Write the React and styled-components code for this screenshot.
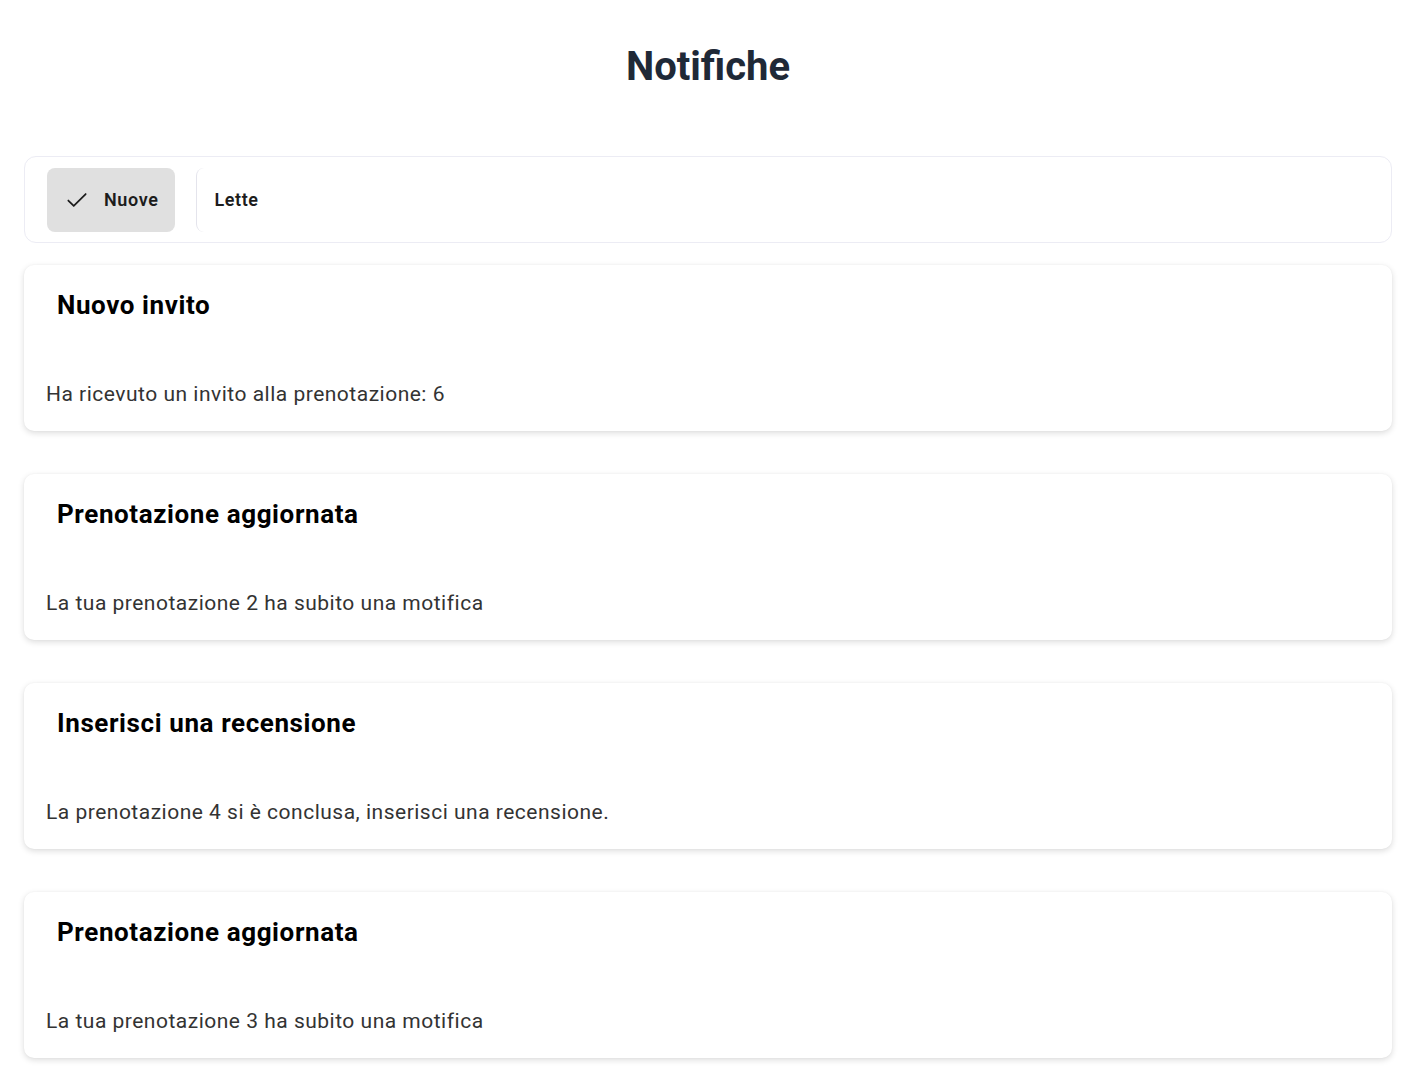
import styled, { createGlobalStyle } from "styled-components";

const GlobalStyle = createGlobalStyle`
    body {
        margin: 0;
        background: #ffffff;
        font-family: Roboto, "Liberation Sans", sans-serif;
    }
`

const Page = styled.div`
    padding: 0 20px 24px 24px;
`

const Title = styled.h1`
    margin: 0;
    padding-top: 42px;
    height: 156px;
    box-sizing: border-box;
    text-align: center;
    font-size: 40px;
    line-height: 50px;
    font-weight: 700;
    color: #1f2937;
`

const Tabs = styled.div`
    display: flex;
    align-items: center;
    gap: 21px;
    height: 87px;
    box-sizing: border-box;
    padding: 0 22px;
    border: 1px solid #ececf4;
    border-radius: 12px;
`

const Tab = styled.button`
    display: flex;
    align-items: center;
    gap: 14px;
    height: 64px;
    padding: 0 17px;
    border: none;
    border-left: ${p => p.$active ? "none" : "1px solid #e4e4ec"};
    border-radius: 8px;
    background: ${p => p.$active ? "#e0e0e0" : "transparent"};
    font-family: Roboto, "Liberation Sans", sans-serif;
    font-size: 18px;
    font-weight: 600;
    letter-spacing: 0.6px;
    color: #1c1c1c;
    cursor: pointer;
`

const List = styled.div`
    display: flex;
    flex-direction: column;
    gap: 43px;
    margin-top: 22px;
`

const Card = styled.div`
    height: 166px;
    box-sizing: border-box;
    display: flex;
    flex-direction: column;
    justify-content: space-between;
    padding: 24px 22px 24px 22px;
    background: #fff;
    border-radius: 10px;
    box-shadow: 0 2px 6px rgba(0, 0, 0, 0.14), 0 0 2px rgba(0, 0, 0, 0.04);
`

const CardTitle = styled.h2`
    margin: 0;
    padding-left: 11px;
    font-size: 26px;
    line-height: 32px;
    font-weight: 700;
    letter-spacing: 0.6px;
    color: #000;
`

const CardText = styled.p`
    margin: 0;
    font-size: 21px;
    line-height: 26px;
    letter-spacing: 0.5px;
    color: #333;
`

const Check = () => (
    <svg width="26" height="26" viewBox="0 0 24 24" fill="none" stroke="#1c1c1c" strokeWidth="1.6" strokeLinecap="round" strokeLinejoin="round">
        <path d="M4 12.5l5 5L20 6.5" />
    </svg>
)

const notifications = [
    { title: "Nuovo invito", text: "Ha ricevuto un invito alla prenotazione: 6" },
    { title: "Prenotazione aggiornata", text: "La tua prenotazione 2 ha subito una motifica" },
    { title: "Inserisci una recensione", text: "La prenotazione 4 si è conclusa, inserisci una recensione." },
    { title: "Prenotazione aggiornata", text: "La tua prenotazione 3 ha subito una motifica" },
]

export default function App() {
    return (
        <>
            <GlobalStyle />
            <Page>
                <Title>Notifiche</Title>
                <Tabs>
                    <Tab $active><Check />Nuove</Tab>
                    <Tab>Lette</Tab>
                </Tabs>
                <List>
                    {notifications.map((n, i) => (
                        <Card key={i}>
                            <CardTitle>{n.title}</CardTitle>
                            <CardText>{n.text}</CardText>
                        </Card>
                    ))}
                </List>
            </Page>
        </>
    )
}
